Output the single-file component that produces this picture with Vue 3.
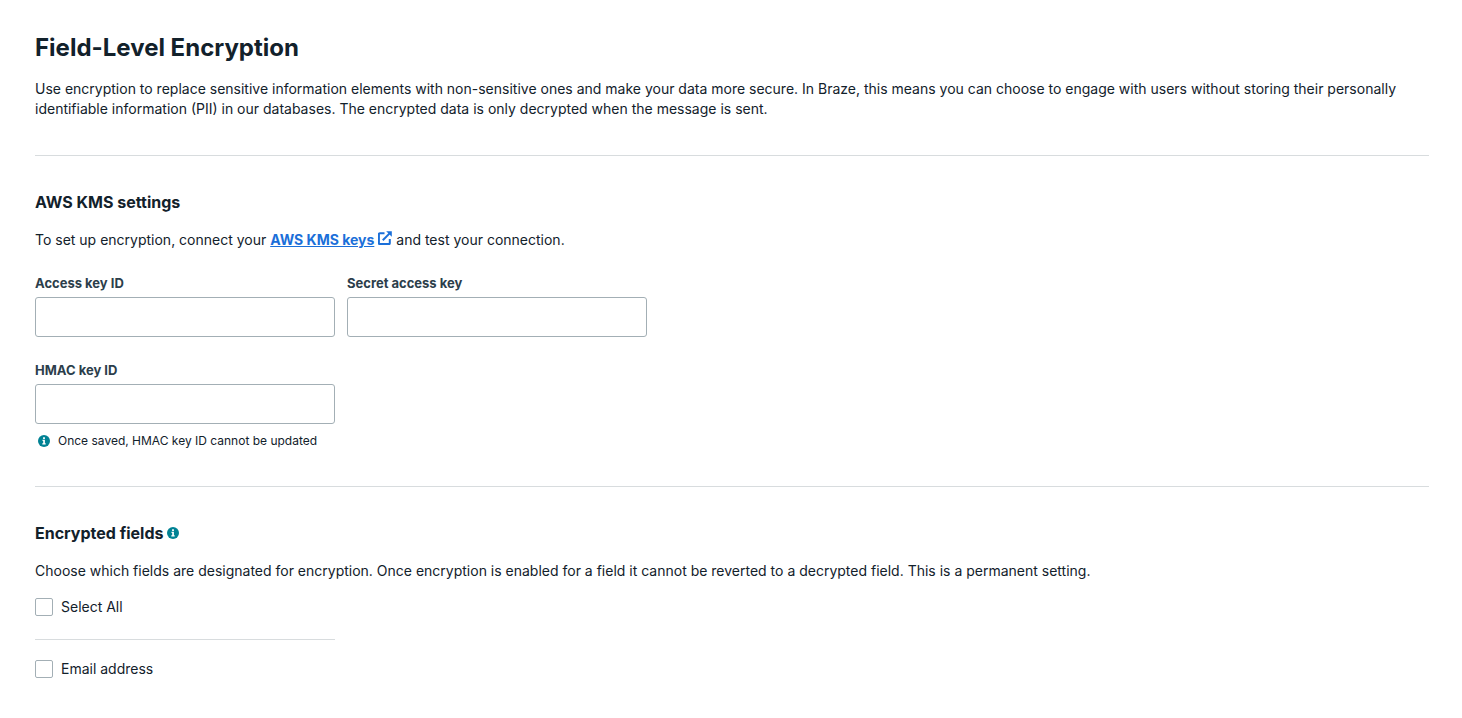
<script setup>
import { reactive, computed } from 'vue'

const keys = reactive({ access: '', secret: '', hmac: '' })
const fields = reactive([{ id: 'email', label: 'Email address', checked: false }])
const allSelected = computed({
  get: () => fields.every((f) => f.checked),
  set: (value) => fields.forEach((f) => { f.checked = value })
})
</script>

<template>
  <main class="page">
    <header class="intro">
      <h1>Field-Level Encryption</h1>
      <p>
        Use encryption to replace sensitive information elements with non-sensitive ones and make
        your data more secure. In Braze, this means you can choose to engage with users without
        storing their personally identifiable information (PII) in our databases. The encrypted
        data is only decrypted when the message is sent.
      </p>
    </header>

    <section class="section">
      <h2>AWS KMS settings</h2>
      <p>
        To set up encryption, connect your
        <a href="#aws-kms">AWS KMS keys</a>
        <svg class="external" viewBox="0 0 14 14" aria-hidden="true">
          <path d="M6.5 2.2H1.8a.9.9 0 0 0-.9.9v9.1c0 .5.4.9.9.9h9.1c.5 0 .9-.4.9-.9V8" />
          <path d="M4.8 9.2 11.6 2.4" />
          <path class="head" d="M8.2.2h5.6v5.6z" />
        </svg>
        and test your connection.
      </p>
      <form class="form" @submit.prevent>
        <div class="row">
          <div class="field">
            <label for="access-key">Access key ID</label>
            <input id="access-key" v-model="keys.access" type="text" />
          </div>
          <div class="field">
            <label for="secret-key">Secret access key</label>
            <input id="secret-key" v-model="keys.secret" type="password" />
          </div>
        </div>
        <div class="field">
          <label for="hmac-key">HMAC key ID</label>
          <input id="hmac-key" v-model="keys.hmac" type="text" aria-describedby="hmac-hint" />
          <div id="hmac-hint" class="hint">
            <svg class="info" viewBox="0 0 12 12" aria-hidden="true">
              <circle cx="6" cy="6" r="6" />
              <path d="M5.1 2.3h1.8v1.6H5.1zM4.5 4.8h2.4v3.5h.8v1.1H4.3V8.3h.9V5.9h-.7z" />
            </svg>
            <span>Once saved, HMAC key ID cannot be updated</span>
          </div>
        </div>
      </form>
    </section>

    <section class="section">
      <h2>
        Encrypted fields
        <svg class="info" viewBox="0 0 12 12" aria-hidden="true">
          <circle cx="6" cy="6" r="6" />
          <path d="M5.1 2.3h1.8v1.6H5.1zM4.5 4.8h2.4v3.5h.8v1.1H4.3V8.3h.9V5.9h-.7z" />
        </svg>
      </h2>
      <p>
        Choose which fields are designated for encryption. Once encryption is enabled for a field it
        cannot be reverted to a decrypted field. This is a permanent setting.
      </p>
      <div class="options">
        <label class="check select-all">
          <input v-model="allSelected" type="checkbox" />
          <span>Select All</span>
        </label>
        <label v-for="field in fields" :key="field.id" class="check">
          <input v-model="field.checked" type="checkbox" />
          <span>{{ field.label }}</span>
        </label>
      </div>
    </section>
  </main>
</template>

<style>
body {
  background: #fff;
}
</style>

<style scoped>
.page {
  padding: 32px 33px 28px 35px;
  color: #12212b;
  font-family: Inter, "Liberation Sans", sans-serif;
  font-size: 14px;
  line-height: 20px;
}
h1,
h2,
p {
  margin: 0;
}
h1 {
  margin-bottom: 15px;
  font-size: 24px;
  font-weight: 700;
  line-height: 32px;
}
h2 {
  display: flex;
  align-items: center;
  gap: 4px;
  margin-bottom: 16px;
  font-size: 16px;
  font-weight: 700;
  line-height: 24px;
}
.section {
  margin-top: 36px;
  padding-top: 34px;
  border-top: 1px solid #d8dcde;
}
a {
  color: #1b6fd9;
  font-weight: 700;
  text-decoration: underline;
}
.external {
  width: 14px;
  height: 14px;
  margin-left: 4px;
  fill: none;
  stroke: #1b6fd9;
  stroke-width: 2;
}
.external .head {
  fill: #1b6fd9;
  stroke: none;
}
.form {
  display: flex;
  flex-direction: column;
  gap: 23px;
  margin-top: 23px;
}
.row {
  display: flex;
  gap: 12px;
}
.field {
  width: 300px;
}
.field label {
  display: block;
  margin-bottom: 4px;
  color: #2c3e4b;
  font-size: 13px;
  font-weight: 700;
}
.field input {
  display: block;
  box-sizing: border-box;
  width: 100%;
  height: 40px;
  padding: 0 12px;
  border: 1px solid #a3afb5;
  border-radius: 3px;
  background: #fff;
  color: inherit;
  font: inherit;
}
.hint {
  display: flex;
  align-items: center;
  gap: 8px;
  margin-top: 8px;
  padding-left: 3px;
  font-size: 12px;
  line-height: 18px;
}
.info {
  flex: none;
  width: 12px;
  height: 12px;
}
.info circle {
  fill: #008294;
}
.info path {
  fill: #fff;
}
.options {
  width: 300px;
  margin-top: 16px;
}
.check {
  display: flex;
  align-items: center;
  gap: 8px;
}
.select-all {
  margin-bottom: 19px;
  padding-bottom: 22px;
  border-bottom: 1px solid #d8dcde;
}
.check input {
  appearance: none;
  box-sizing: border-box;
  width: 18px;
  height: 18px;
  margin: 0;
  border: 1px solid #a3afb5;
  border-radius: 2px;
  background: #fff;
}
.check input:checked {
  background: #008294;
}
</style>
